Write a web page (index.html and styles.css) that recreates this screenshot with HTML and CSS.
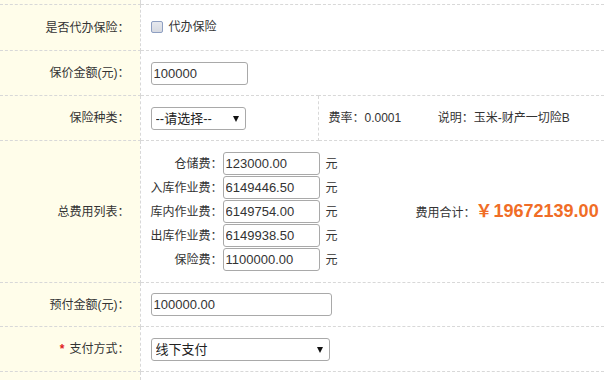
FILE: index.html
```html
<!DOCTYPE html>
<html lang="zh-CN">
<head>
    <meta charset="UTF-8">
    <meta name="viewport" content="width=device-width, initial-scale=1.0">
    <title>保险与费用</title>
    <link rel="stylesheet" href="styles.css">
</head>
<body>
    <table class="form-table">
        <colgroup>
            <col class="col-label">
            <col class="col-field">
            <col>
        </colgroup>
        <tr class="row-cut">
            <th></th>
            <td colspan="2"></td>
        </tr>
        <tr class="row-first">
            <th>是否代办保险：</th>
            <td colspan="2">
                <label class="check"><input type="checkbox"><span>代办保险</span></label>
            </td>
        </tr>
        <tr>
            <th>保价金额(元)：</th>
            <td colspan="2"><input class="txt" type="text" value="100000"></td>
        </tr>
        <tr>
            <th>保险种类：</th>
            <td class="cell-select">
                <span class="select-wrap">
                    <select class="sel">
                        <option>--请选择--</option>
                    </select>
                </span>
            </td>
            <td class="cell-rate">
                <span class="rate">费率：0.0001</span>
                <span class="note">说明：玉米-财产一切险B</span>
            </td>
        </tr>
        <tr class="row-fees">
            <th>总费用列表：</th>
            <td colspan="2">
                <div class="fees">
                    <div class="fee-list">
                        <label>仓储费：</label>
                        <input class="txt" type="text" value="123000.00">
                        <span>元</span>
                        <label>入库作业费：</label>
                        <input class="txt" type="text" value="6149446.50">
                        <span>元</span>
                        <label>库内作业费：</label>
                        <input class="txt" type="text" value="6149754.00">
                        <span>元</span>
                        <label>出库作业费：</label>
                        <input class="txt" type="text" value="6149938.50">
                        <span>元</span>
                        <label>保险费：</label>
                        <input class="txt" type="text" value="1100000.00">
                        <span>元</span>
                    </div>
                    <div class="fee-total">
                        费用合计：<strong><em>￥</em>19672139.00</strong>
                    </div>
                </div>
            </td>
        </tr>
        <tr class="row-prepay">
            <th>预付金额(元)：</th>
            <td colspan="2"><input class="txt wide" type="text" value="100000.00"></td>
        </tr>
        <tr class="row-last">
            <th><i class="req">*</i>支付方式：</th>
            <td colspan="2">
                <span class="select-wrap">
                    <select class="sel wide">
                        <option>线下支付</option>
                    </select>
                </span>
            </td>
        </tr>
        <tr class="row-cut">
            <th></th>
            <td colspan="2"></td>
        </tr>
    </table>
</body>
</html>
```
FILE: styles.css
```css
body {
    margin: 0;
    font-family: "Liberation Sans", "Noto Sans CJK SC", sans-serif;
    font-size: 12px;
    color: #333;
    background-color: #fff;
}

.form-table {
    width: 100%;
    border-collapse: collapse;
    table-layout: fixed;
}

.col-label {
    width: 140px;
}

.col-field {
    width: 178px;
}

.form-table th,
.form-table td {
    border-top: 1px dashed #d8d8d8;
    border-bottom: 1px dashed #d8d8d8;
    height: 44px;
    padding: 0 10px;
    line-height: 16px;
}

.form-table th {
    text-align: right;
    font-weight: normal;
    background-color: #fffdea;
    border-right: 1px dashed #d8d8d8;
}

.form-table .row-cut th,
.form-table .row-cut td {
    height: 4px;
    padding: 0;
    border-top: none;
}

.form-table .row-cut:last-child th,
.form-table .row-cut:last-child td {
    height: 8px;
    border-bottom: none;
}

.form-table .row-first th,
.form-table .row-first td {
    height: 45px;
}

.form-table .row-prepay th,
.form-table .row-prepay td {
    height: 43px;
}

.check {
    display: inline-flex;
    align-items: center;
}

.check input {
    appearance: none;
    width: 12px;
    height: 12px;
    margin: 0 6px 0 0;
    border: 1px solid #8e9fc2;
    border-radius: 2px;
    background: linear-gradient(#e6e8ee, #d6d9e1);
}

.txt {
    box-sizing: border-box;
    width: 97px;
    height: 23px;
    padding: 0 2px;
    border: 1px solid #a9a9a9;
    border-radius: 3px;
    font-family: "Liberation Sans", sans-serif;
    font-size: 13px;
    color: #333;
}

.txt.wide {
    width: 181px;
}

.select-wrap {
    position: relative;
    display: inline-block;
    vertical-align: middle;
}

.select-wrap::after {
    content: "";
    position: absolute;
    right: 7px;
    top: 9px;
    border-left: 3px solid transparent;
    border-right: 3px solid transparent;
    border-top: 6px solid #111;
    pointer-events: none;
}

.sel {
    appearance: none;
    box-sizing: border-box;
    width: 95px;
    height: 23px;
    padding: 0 4px;
    border: 1px solid #a9a9a9;
    border-radius: 3px;
    background-color: #fff;
    font-family: "Liberation Sans", "Noto Sans CJK SC", sans-serif;
    font-size: 13px;
    color: #222;
}

.sel.wide {
    width: 179px;
}

.cell-select {
    border-right: 1px dashed #d8d8d8;
}

.cell-rate {
    padding-left: 11px;
}

.cell-rate .rate {
    display: inline-block;
    width: 106px;
}

.row-fees td {
    height: 141px;
}

.fees {
    display: flex;
    align-items: center;
}

.fee-list {
    display: grid;
    grid-template-columns: 72px 97px auto;
    row-gap: 1px;
    align-items: center;
}

.fee-list label {
    text-align: right;
}

.fee-list span {
    padding-left: 6px;
}

.fee-total {
    margin-left: 78px;
    white-space: nowrap;
}

.fee-total strong {
    font-family: "Liberation Sans", sans-serif;
    font-size: 18px;
    color: #f06d26;
}

.fee-total em {
    font-style: normal;
    font-weight: bold;
    font-family: "Noto Sans CJK SC", sans-serif;
    font-size: 17px;
    margin-right: 1px;
}

.req {
    font-style: normal;
    font-weight: bold;
    color: #e02020;
    margin-right: 5px;
}
```
